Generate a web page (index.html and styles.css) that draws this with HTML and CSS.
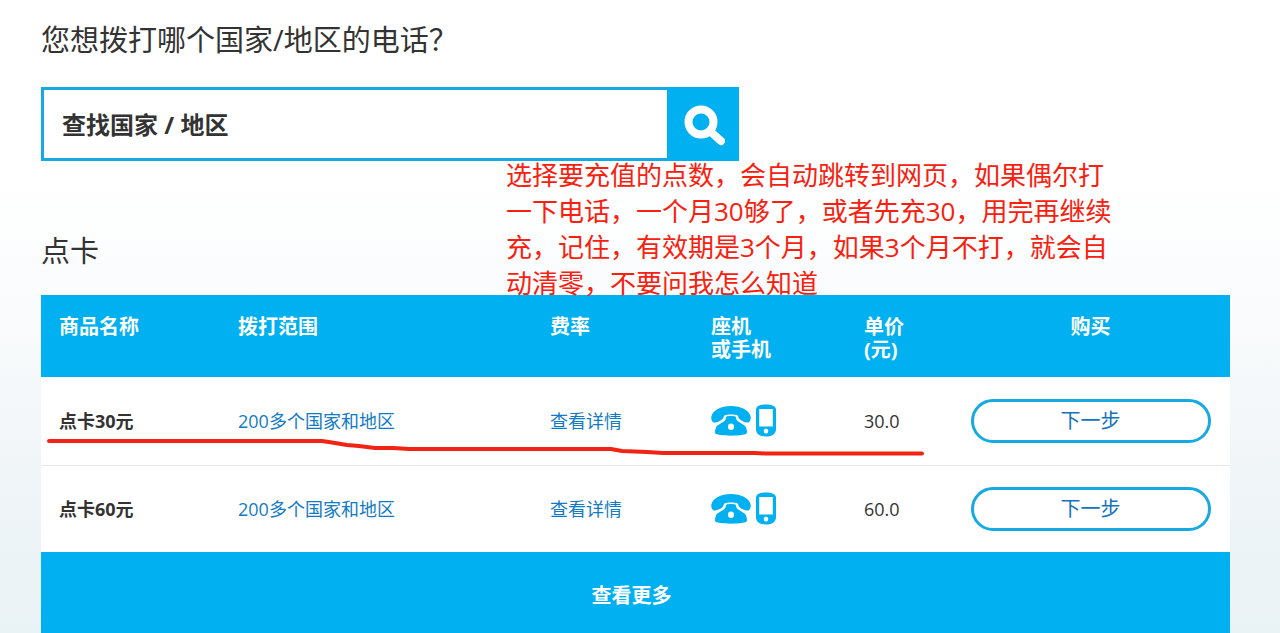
FILE: index.html
```html
<!DOCTYPE html>
<html lang="zh-CN">
<head>
<meta charset="utf-8">
<meta name="viewport" content="width=device-width, initial-scale=1">
<title>点卡</title>
<link rel="stylesheet" href="styles.css">
</head>
<body>
<svg class="defs" width="0" height="0" aria-hidden="true">
  <symbol id="phone" viewBox="0 0 40 32">
    <path d="M.3 12C1 5.500 10 1 20 1s19 4.500 19.700 11c.3 3.500-1.500 6-4 5.500-3-.6-6-2-7.500-3.800-.9-1.200-.6-2.500-1.700-3.300-2-1.200-11-1.200-13 0-1.100.8-.8 2.100-1.700 3.300-1.500 1.800-4.500 3.200-7.500 3.800-2.500.5-4.300-2-4-5.500z"/>
    <path fill-rule="evenodd" d="M15.500 11.500c2-.8 7-.8 9 0 .8.800.5 2.300 1.200 3.500 1.800 2.600 7.900 4.300 9.300 7.500.8 2 1.200 4 .9 5.500-.5 3.500-31.300 3.500-31.800 0-.3-1.500.1-3.500.9-5.500 1.400-3.200 7.500-4.900 9.300-7.500.7-1.200.4-2.700 1.200-3.500zM20 18.500a3 3.200 0 1 0 0 6.400 3 3.200 0 0 0 0-6.400z"/>
  </symbol>
  <symbol id="mobile" viewBox="0 0 20 33">
    <path fill-rule="evenodd" d="M0 6C0 2 4 .5 10 .5S20 2 20 6v19c0 5-4 7.500-10 7.500S0 30 0 25zM3.200 5v17.500h13.600V5zM10 24.500a2.300 2.500 0 1 0 0 5 2.300 2.500 0 0 0 0-5z"/>
  </symbol>
</svg>
<main class="page">
  <h1 class="title">您想拨打哪个国家/地区的电话？</h1>
  <form class="search">
    <input class="search-input" type="text" aria-label="查找国家 / 地区" placeholder="查找国家 / 地区">
    <button class="search-button" type="button" aria-label="搜索">
      <svg width="42" height="42" viewBox="0 0 42 42" fill="none" stroke="#fff" stroke-linecap="round">
        <circle cx="18" cy="18" r="12.500" stroke-width="8"/>
        <path d="M28.500 28.500l9.500 8.500" stroke-width="8"/>
      </svg>
    </button>
  </form>
  <h2 class="title section-title">点卡</h2>
  <section class="cards">
    <p class="note">选择要充值的点数，会自动跳转到网页，如果偶尔打<br>一下电话，一个月30够了，或者先充30，用完再继续<br>充，记住，有效期是3个月，如果3个月不打，就会自<br>动清零，不要问我怎么知道</p>
    <table class="table">
      <colgroup>
        <col class="col-name"><col class="col-range"><col class="col-rate"><col class="col-device"><col class="col-price"><col class="col-buy">
      </colgroup>
      <thead>
        <tr><th>商品名称</th><th>拨打范围</th><th>费率</th><th>座机<br>或手机</th><th>单价<br>(元)</th><th class="buy">购买</th></tr>
      </thead>
      <tbody>
        <tr>
          <td class="name">点卡30元</td>
          <td><a href="#range">200多个国家和地区</a></td>
          <td><a href="#rate">查看详情</a></td>
          <td><span class="devices"><svg width="40" height="32"><use href="#phone"/></svg><svg width="20" height="33"><use href="#mobile"/></svg></span></td>
          <td>30.0</td>
          <td class="buy"><button class="next" type="button">下一步</button></td>
        </tr>
        <tr>
          <td class="name">点卡60元</td>
          <td><a href="#range">200多个国家和地区</a></td>
          <td><a href="#rate">查看详情</a></td>
          <td><span class="devices"><svg width="40" height="32"><use href="#phone"/></svg><svg width="20" height="33"><use href="#mobile"/></svg></span></td>
          <td>60.0</td>
          <td class="buy"><button class="next" type="button">下一步</button></td>
        </tr>
      </tbody>
    </table>
    <button class="more" type="button">查看更多</button>
    <svg class="marker" width="880" height="20" viewBox="0 0 880 20" aria-hidden="true">
      <path d="M2 4H275L285 5.500L300 8L312 9L328 11H346L362 12H564L575 14L600 15L616 16H708L718 16.500H875"/>
    </svg>
  </section>
</main>
</body>
</html>
```
FILE: styles.css
```css
* {
  box-sizing: border-box;
}

body {
  margin: 0;
  min-height: 100vh;
  background: linear-gradient(#fff 0, #fff 180px, #f9fbfc 320px, #f0f5f8 470px, #e9f2f4 633px);
  color: #333;
  font-family: "Open Sans", "Noto Sans CJK SC", sans-serif;
  font-size: 18px;
  line-height: 24px;
}

.defs {
  position: absolute;
}

.page {
  padding: 20px 50px 0 41px;
}

.title {
  margin: 0;
  font-size: 29px;
  font-weight: 400;
  line-height: 40px;
}

.search {
  display: flex;
  max-width: 698px;
  height: 74px;
  margin-top: 27px;
  border: 3px solid #17a9e1;
  background: #fff;
}

.search-input {
  flex: 1;
  min-width: 0;
  padding: 0 18px;
  border: 0;
  outline: 0;
  background: none;
  color: #333;
  font: inherit;
  font-size: 24px;
  font-weight: 700;
}

.search-input::placeholder {
  color: #333;
  opacity: 1;
}

.search-button {
  display: grid;
  place-items: center;
  width: 72px;
  margin: -3px;
  padding: 2px 0 0 2px;
  border: 0;
  background: #00b0f0;
}

.section-title {
  margin-top: 70px;
}

.cards {
  position: relative;
  margin-top: 24px;
}

.note {
  position: absolute;
  left: 465px;
  bottom: 100%;
  margin: 0 0 -6px;
  color: #f8200f;
  font-size: 26px;
  font-weight: 400;
  line-height: 36px;
  white-space: nowrap;
}

.table {
  width: 100%;
  table-layout: fixed;
  border-collapse: collapse;
  background: #fff;
}

.col-name { width: 179px; }
.col-range { width: 312px; }
.col-rate { width: 161px; }
.col-device { width: 153px; }
.col-price { width: 105px; }
.col-buy { width: 279px; }

th,
td {
  padding: 0 0 0 18px;
  text-align: left;
}

th {
  height: 82px;
  padding-top: 20px;
  background: #00b0f0;
  color: #fff;
  font-size: 20px;
  font-weight: 700;
  line-height: 23px;
  vertical-align: top;
}

td {
  height: 88px;
  vertical-align: middle;
}

tbody tr + tr td {
  height: 87px;
  border-top: 1px solid #e8e8e8;
}

.name {
  font-weight: 700;
}

a {
  color: #127bc4;
  font-weight: 400;
  text-decoration: none;
}

.devices {
  display: flex;
  align-items: center;
  gap: 5px;
  fill: #00b0f0;
}

.buy {
  padding: 0;
  text-align: center;
}

th.buy {
  padding-top: 20px;
}

.next {
  width: 240px;
  height: 44px;
  padding: 0;
  border: 3px solid #17a9e1;
  border-radius: 22px;
  background: #fff;
  color: #1273bd;
  font: inherit;
  font-size: 20px;
}

.more {
  display: block;
  width: 100%;
  height: 81px;
  padding: 6px 8px 0 0;
  border: 0;
  background: #00b0f0;
  color: #fff;
  font: inherit;
  font-size: 20px;
  font-weight: 700;
}

.marker {
  position: absolute;
  top: 142px;
  left: 6px;
  fill: none;
  stroke: #f02314;
  stroke-width: 4;
  stroke-linecap: round;
  stroke-linejoin: round;
  pointer-events: none;
}
```
